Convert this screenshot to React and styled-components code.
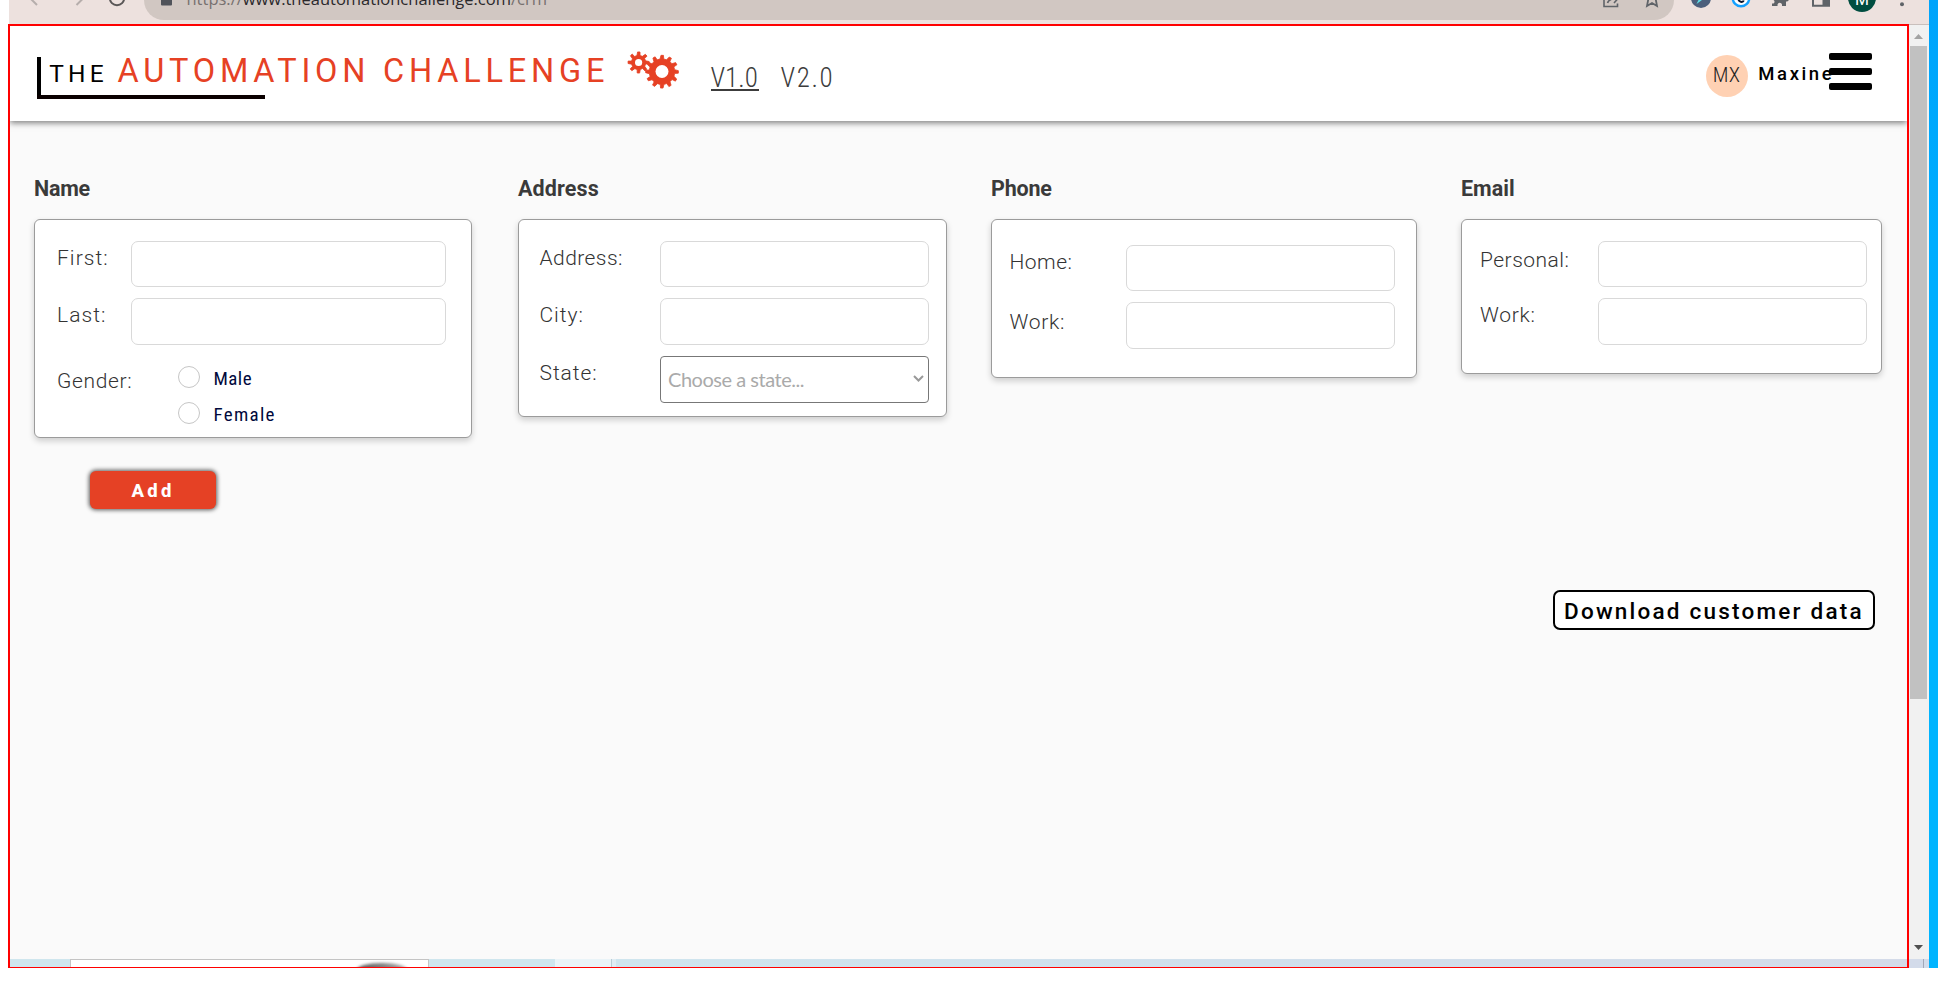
import React from "react";
import styled, { createGlobalStyle } from "styled-components";

const GlobalStyle = createGlobalStyle`
  * { box-sizing: border-box; }
  html, body { margin: 0; padding: 0; background: #fff; }
  body { font-family: Roboto, "Liberation Sans", sans-serif; overflow: hidden; }
`;

/* ---------- shell ---------- */

const Screen = styled.div`
  display: flex;
  width: 1938px;
  height: 993px;
  padding: 0 0 25px 8px;
  overflow: hidden;
  background: #fff;
`;

const BrowserWindow = styled.div`
  display: flex;
  flex-direction: column;
  width: 1921px;
  height: 968px;
`;

const DesktopEdge = styled.div`
  width: 9px;
  height: 968px;
  background: linear-gradient(#00a4fb, #00adff 25%, #00b4ff 60%);
`;

const Viewport = styled.div`
  display: flex;
  height: 944px;
`;

const Frame = styled.div`
  display: flex;
  flex-direction: column;
  width: 1901px;
  height: 944px;
  border: 2px solid #ff0000;
  border-bottom-width: 1px;
  background: #fafafa;
`;

/* ---------- browser toolbar ---------- */

const Toolbar = styled.div`
  display: flex;
  align-items: flex-start;
  height: 24px;
  margin-left: 1px;
  background: #ede1de;
  overflow: hidden;
`;

const ToolIcon = styled.svg`
  flex: none;
  width: ${(p) => p.$w}px;
  height: 24px;
  margin-left: ${(p) => p.$gap}px;
`;

const AddressBar = styled.div`
  display: flex;
  align-items: flex-start;
  flex: none;
  width: 1530px;
  height: 40px;
  margin-top: -20px;
  margin-left: 18px;
  padding: 20px 0 0;
  border-radius: 20px;
  background: #d1c7c2;
`;

const Url = styled.span`
  width: 1415px;
  margin: -12px 0 0 14px;
  font: 400 16.5px/22px "Open Sans", "Noto Sans", sans-serif;
  color: #77706f;
  white-space: nowrap;

  b { font-weight: 400; color: #2b292c; }
`;

const ProfileDot = styled.span`
  flex: none;
  width: 28px;
  height: 28px;
  margin: -16px 0 0 18px;
  border-radius: 50%;
  background: #004d40;
  color: #fff;
  font: 400 16px/32px Roboto, sans-serif;
  text-align: center;
`;

/* ---------- site header ---------- */

const Header = styled.header`
  display: flex;
  align-items: flex-start;
  flex: none;
  height: 95px;
  padding-left: 27px;
  background: #fff;
  box-shadow: 0 2px 6px rgba(0, 0, 0, 0.5);
  clip-path: inset(0 0 -12px 0);
`;

const Brand = styled.div`
  width: 590px;
  margin-top: 31px;
`;

const BrandText = styled.div`
  display: flex;
  align-items: baseline;
  height: 38px;
  padding-left: 8.2px;
  border-left: 4px solid #000;
  line-height: 28px;
  white-space: nowrap;
`;

const BrandSmall = styled.span`
  width: 68.3px;
  font-size: 24.5px;
  letter-spacing: 4.2px;
  color: #000;
`;

const BrandLarge = styled.span`
  font-size: 32.5px;
  font-weight: 400;
  letter-spacing: 4.78px;
  color: #e64124;
`;

const BrandRule = styled.div`
  width: 228px;
  height: 4px;
  background: #0a0000;
`;

const Gears = styled.svg`
  flex: none;
  width: 54px;
  height: 40px;
  margin-top: 25px;
`;

const Versions = styled.nav`
  display: flex;
  width: 1024.5px;
  padding: 36px 0 0 29.5px;
`;

const Version = styled.a`
  width: 70px;
  font-size: 27px;
  font-weight: 300;
  font-stretch: 87.5%;
  line-height: 32px;
  letter-spacing: ${(p) => p.$spacing}px;
  color: #3c3c3c;

  span {
    padding-right: 1.5px;
    border-bottom: ${(p) => (p.$current ? "2px solid #3c3c3c" : "0")};
    display: inline-block;
    height: 29px;
  }
`;

const Avatar = styled.div`
  width: 42px;
  height: 42px;
  margin-top: 29px;
  border-radius: 50%;
  background: #ffd1b3;
  font-size: 21px;
  font-weight: 300;
  font-stretch: 87.5%;
  line-height: 40px;
  letter-spacing: 0.3px;
  text-align: center;
  color: #222;
`;

const UserName = styled.div`
  width: 81px;
  margin-top: 37px;
  padding-left: 10.8px;
  font-size: 18.5px;
  font-weight: 500;
  line-height: 22px;
  letter-spacing: 2.6px;
  white-space: nowrap;
  color: #000;
`;

const MenuButton = styled.button`
  display: flex;
  flex-direction: column;
  justify-content: space-between;
  width: 43.5px;
  height: 37px;
  margin: 27px 0 0;
  padding: 0;
  border: 0;
  background: none;
  z-index: 1;
`;

const MenuBar = styled.span`
  height: 7.4px;
  border-radius: 2px;
  background: #000;
`;

/* ---------- form ---------- */

const Main = styled.main`
  flex: 1;
  display: flex;
  flex-direction: column;
  align-items: flex-start;
  padding: 55px 25px 0 24px;
`;

const Sections = styled.div`
  display: grid;
  grid-template-columns: 440px 429px 426px 421px;
  column-gap: 44px;
  align-items: start;
  width: 1848px;
`;

const SectionTitle = styled.h2`
  height: 43px;
  margin: 0;
  font-size: 21.5px;
  font-weight: 700;
  line-height: 25px;
  letter-spacing: ${(p) => p.$spacing || 0}px;
  color: #3a3a3a;
`;

const Card = styled.div`
  width: ${(p) => (p.$w ? `${p.$w}px` : "100%")};
  height: ${(p) => p.$h}px;
  padding: ${(p) => p.$pad};
  border: 1px solid #9b9b9b;
  border-radius: 6px;
  background: #fff;
  box-shadow: 0 3px 6px rgba(0, 0, 0, 0.18);
`;

const Fields = styled.div`
  display: grid;
  grid-template-columns: ${(p) => p.$cols};
  grid-template-rows: 46px 47px 47px;
  row-gap: 11px;
`;

const Label = styled.label`
  height: 24px;
  margin-top: ${(p) => p.$drop ?? 5}px;
  font-size: 21px;
  font-weight: 300;
  line-height: 24px;
  letter-spacing: ${(p) => p.$spacing}px;
  white-space: nowrap;
  color: #333;
`;

const Input = styled.input`
  width: 100%;
  height: 100%;
  border: 1px solid #d9d9d9;
  border-radius: 7px;
  outline: 0;
  background: #fff;
`;

const Select = styled.div`
  display: flex;
  align-items: center;
  justify-content: space-between;
  padding: 0 4px 1px 7px;
  border: 1px solid #777;
  border-radius: 4px;
  font: 400 20px/30px Lato, sans-serif;
  letter-spacing: -0.47px;
  color: #aaa;
`;

const GenderRow = styled.div`
  display: grid;
  grid-template-columns: 121px 1fr;
  margin-top: -37px;
`;

const Radios = styled.div`
  display: grid;
  row-gap: 10.5px;
`;

const Radio = styled.label`
  display: flex;
  align-items: flex-start;
  gap: 13.5px;
  height: 25px;
  font-size: 19px;
  font-stretch: 87.5%;
  line-height: 25px;
  letter-spacing: ${(p) => p.$spacing}px;
  color: #00093c;

  input {
    appearance: none;
    width: 22px;
    height: 22px;
    margin: 0;
    border: 1px solid #c6c6c6;
    border-radius: 50%;
    background: #fff;
  }
`;

const AddButton = styled.button`
  width: 126px;
  height: 38px;
  margin: 33px 0 0 56px;
  padding: 2px 0 0 41.5px;
  border: 0;
  border-radius: 6px;
  background: #e54125;
  box-shadow: 0 0 4px 1px rgba(0, 0, 0, 0.65);
  font: 800 18.5px/36px Roboto, sans-serif;
  letter-spacing: 3.3px;
  text-align: left;
  color: #fff;
`;

const DownloadButton = styled.button`
  align-self: flex-end;
  width: 322px;
  height: 40px;
  margin: 81px 7px 0 0;
  padding: 2px 0 0 9px;
  border: 2px solid #000;
  border-radius: 7px;
  background: #fff;
  font: 500 22.5px/34px Roboto, sans-serif;
  letter-spacing: 2.22px;
  text-align: left;
  white-space: nowrap;
  color: #000;
`;

/* ---------- window behind the page ---------- */

const BackdropStrip = styled.div`
  display: flex;
  flex: none;
  height: 8px;
  overflow: hidden;
`;

const Sky = styled.div`
  flex: ${(p) => (p.$w ? `0 0 ${p.$w}px` : "1")};
  background: ${(p) => p.$fill || "#cfe6ee"};
`;

const BackdropCard = styled.div`
  display: flex;
  justify-content: flex-end;
  flex: 0 0 359px;
  padding: 3px 21px 0 0;
  border: 1px solid #c4c4c4;
  border-bottom: 0;
  background: #fff;
  overflow: hidden;
`;

const BackdropShade = styled.div`
  width: 50px;
  height: 14px;
  border-radius: 50%;
  background: linear-gradient(90deg, #555, #aaa);
  filter: blur(1.5px);
`;

/* ---------- scrollbar ---------- */

const Scrollbar = styled.div`
  display: flex;
  flex-direction: column;
  width: 20px;
  height: 944px;
  border-top: 1px solid #c9bfbc;
  background: #f1f1f1;
`;

const ScrollArrow = styled.svg`
  flex: none;
  width: 18px;
  height: ${(p) => p.$h}px;
`;

const ScrollThumb = styled.div`
  flex: none;
  width: 17px;
  height: 653px;
  margin: 0 0 239px 1px;
  background: #c1c1c1;
`;

const ScrollFoot = styled.div`
  flex: none;
  height: 9px;
  border-right: 1px solid #a2a8b8;
  margin-right: 5px;
  background: #d3dbea;
  box-shadow: 5px 0 0 #d3dbea;
`;

function cog(cx, cy, teeth, outer, root) {
  const step = (Math.PI * 2) / teeth;
  const at = (r, a) => `${(cx + r * Math.cos(a)).toFixed(2)} ${(cy + r * Math.sin(a)).toFixed(2)}`;
  const pts = [];
  for (let i = 0; i < teeth; i += 1) {
    const a = i * step - Math.PI / 2;
    pts.push(at(root, a - step * 0.3), at(outer, a - step * 0.12), at(outer, a + step * 0.17), at(root, a + step * 0.26));
  }
  return `M${pts.join("L")}Z`;
}

const NAV_ICON = "#5f6368";

function BrowserToolbar() {
  return (
    <Toolbar>
      <ToolIcon $w={10} $gap={20} viewBox="0 0 10 24" fill="none" stroke="#b6aeac" strokeWidth="2">
        <path d="M8 5L1 -2" />
      </ToolIcon>
      <ToolIcon $w={10} $gap={36} viewBox="0 0 10 24" fill="none" stroke="#b6aeac" strokeWidth="2">
        <path d="M1.500 5L8.500 -2" />
      </ToolIcon>
      <ToolIcon $w={18} $gap={22.5} viewBox="0 0 18 24" fill="none" stroke="#5a5757" strokeWidth="2">
        <circle cx="9" cy="-2" r="7.200" />
      </ToolIcon>
      <AddressBar>
        <ToolIcon $w={12} $gap={17} viewBox="0 0 12 24" fill="#50535a">
          <rect x="0" y="-6" width="11" height="11.500" rx="1" />
        </ToolIcon>
        <Url>
          https://<b>www.theautomationchallenge.com</b>/crm
        </Url>
        <ToolIcon $w={16} $gap={1} viewBox="0 0 16 24" fill="none" stroke={NAV_ICON} strokeWidth="1.600">
          <path d="M1 -4V6.500H14.500V3.500M4.500 3C5.500 0 8 -1 11.500 -1.500M11 3L15 -1.500" />
        </ToolIcon>
        <ToolIcon $w={14} $gap={26.5} viewBox="0 0 14 24" fill="none" stroke={NAV_ICON} strokeWidth="1.800">
          <path d="M3.500 -2L2 6L7 3L12 6L10.500 -2" />
        </ToolIcon>
      </AddressBar>
      <ToolIcon $w={20} $gap={17} viewBox="0 0 20 24">
        <circle cx="10" cy="-2" r="10" fill="#4c5f7c" />
        <path d="M5.500 4L9 -3L15 -3Z" fill="#5ee4ea" />
      </ToolIcon>
      <ToolIcon $w={20} $gap={20} viewBox="0 0 20 24" fill="#fff">
        <circle cx="10" cy="-2" r="8.300" stroke="#14a0ff" strokeWidth="2.400" />
        <path d="M7.200 -2C7.500 2.800 12 2.600 12.800 0.500" fill="none" stroke="#08142c" strokeWidth="2" />
      </ToolIcon>
      <ToolIcon $w={18} $gap={21.5} viewBox="0 0 18 24" fill={NAV_ICON}>
        <path d="M0 -4V0H1.500A2 2 0 0 1 1.500 3.500H0V6H5.500V4.500A2.300 2.300 0 0 1 10 4.500V6H14V1.500H15A2.300 2.300 0 0 0 15 -3H14V-6Z" />
      </ToolIcon>
      <ToolIcon $w={18} $gap={22} viewBox="0 0 18 24" fill={NAV_ICON}>
        <path d="M0 -6H18V6.800H0ZM2 -4V4.800H10.500V-4Z" fillRule="evenodd" />
      </ToolIcon>
      <ProfileDot>M</ProfileDot>
      <ToolIcon $w={6} $gap={22.5} viewBox="0 0 6 24" fill={NAV_ICON}>
        <circle cx="3" cy="4.300" r="2" />
      </ToolIcon>
    </Toolbar>
  );
}

function SiteHeader() {
  return (
    <Header>
      <Brand>
        <BrandText>
          <BrandSmall>THE</BrandSmall>
          <BrandLarge>AUTOMATION CHALLENGE</BrandLarge>
        </BrandText>
        <BrandRule />
      </Brand>
      <Gears viewBox="0 0 54 40" fill="#e64124" stroke="#e64124" strokeWidth="0.8" strokeLinejoin="round">
        <path d={cog(11.6, 11.5, 8, 10.6, 7.2)} />
        <path d={cog(35, 20.7, 12, 16.4, 12.8)} />
        <circle cx="11.600" cy="11.500" r="3.600" fill="#fff" stroke="none" />
        <circle cx="35" cy="20.500" r="6.500" fill="#fff" stroke="none" />
      </Gears>
      <Versions>
        <Version $current $spacing={0}><span>V1.0</span></Version>
        <Version $spacing={1.6}><span>V2.0</span></Version>
      </Versions>
      <Avatar>MX</Avatar>
      <UserName>Maxine</UserName>
      <MenuButton aria-label="Menu">
        <MenuBar />
        <MenuBar />
        <MenuBar />
      </MenuButton>
    </Header>
  );
}

export default function App() {
  return (
    <Screen>
      <GlobalStyle />
      <BrowserWindow>
        <BrowserToolbar />
        <Viewport>
          <Frame>
            <SiteHeader />
            <Main>
              <Sections>
                <section>
                  <SectionTitle $spacing={-0.25}>Name</SectionTitle>
                  <Card $w={438} $h={219} $pad="21px 0 0 22px">
                    <Fields $cols="74px 315px">
                      <Label $spacing={1.06}>First:</Label>
                      <Input />
                      <Label $spacing={1.07}>Last:</Label>
                      <Input />
                    </Fields>
                    <GenderRow>
                      <Label $spacing={0.65} $drop={3}>Gender:</Label>
                      <Radios>
                        <Radio $spacing={0.45}><input type="radio" name="gender" />Male</Radio>
                        <Radio $spacing={1.3}><input type="radio" name="gender" />Female</Radio>
                      </Radios>
                    </GenderRow>
                  </Card>
                </section>
                <section>
                  <SectionTitle $spacing={0.12}>Address</SectionTitle>
                  <Card $h={198} $pad="21px 0 0 20.5px">
                    <Fields $cols="120.5px 269px">
                      <Label $spacing={0.43}>Address:</Label>
                      <Input />
                      <Label $spacing={0.98}>City:</Label>
                      <Input />
                      <Label $spacing={0.95}>State:</Label>
                      <Select role="combobox">
                        Choose a state...
                        <svg width="11" height="8" viewBox="0 0 11 8" fill="none" stroke="#999" strokeWidth="2">
                          <path d="M1 1L5.500 5.500L10 1" />
                        </svg>
                      </Select>
                    </Fields>
                  </Card>
                </section>
                <section>
                  <SectionTitle $spacing={-0.2}>Phone</SectionTitle>
                  <Card $h={159} $pad="25px 0 0 17.5px">
                    <Fields $cols="116.5px 269px">
                      <Label $spacing={0.47}>Home:</Label>
                      <Input />
                      <Label $spacing={0.71} $drop={8}>Work:</Label>
                      <Input />
                    </Fields>
                  </Card>
                </section>
                <section>
                  <SectionTitle>Email</SectionTitle>
                  <Card $h={155} $pad="21px 0 0 18px">
                    <Fields $cols="118px 269px">
                      <Label $spacing={0.48} $drop={7}>Personal:</Label>
                      <Input />
                      <Label $spacing={0.71}>Work:</Label>
                      <Input />
                    </Fields>
                  </Card>
                </section>
              </Sections>
              <AddButton>Add</AddButton>
              <DownloadButton>Download customer data</DownloadButton>
            </Main>
            <BackdropStrip>
              <Sky $w={59.5} />
              <BackdropCard><BackdropShade /></BackdropCard>
              <Sky $w={126.5} />
              <Sky $w={56} $fill="#eaf4f8" />
              <Sky $w={1} $fill="#b9cdd6" />
              <Sky $w={4} $fill="#dfedf4" />
              <Sky $fill="linear-gradient(90deg, #cfe5ee, #d0dfec 50%, #d4dbe9)" />
            </BackdropStrip>
          </Frame>
          <Scrollbar>
            <ScrollArrow $h={21} viewBox="0 0 18 21"><path d="M5 14L9.500 9L14 14Z" fill="#a3a3a3" /></ScrollArrow>
            <ScrollThumb />
            <ScrollArrow $h={21} viewBox="0 0 18 21"><path d="M5 7L9.500 12L14 7Z" fill="#505050" /></ScrollArrow>
            <ScrollFoot />
          </Scrollbar>
        </Viewport>
      </BrowserWindow>
      <DesktopEdge />
    </Screen>
  );
}
